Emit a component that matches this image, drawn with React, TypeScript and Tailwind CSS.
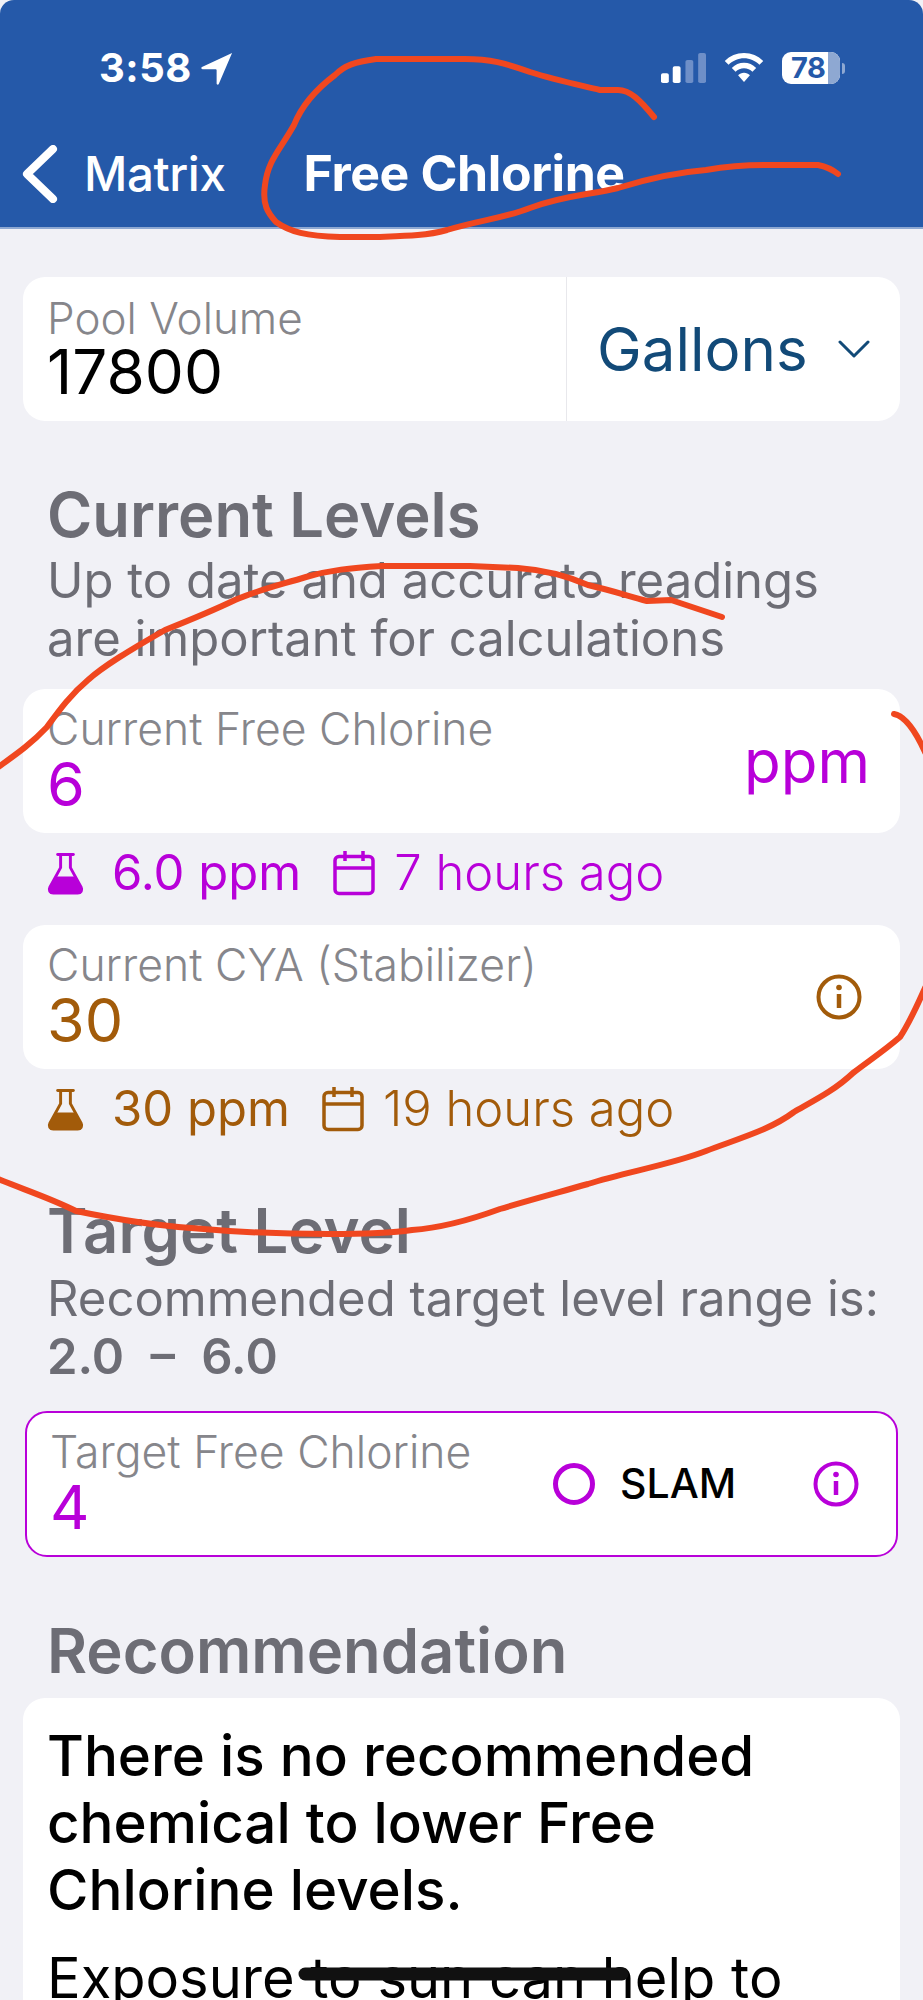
import React from "react";

const MAGENTA = "#b800d9";
const BROWN = "#a25b0a";

function Flask({ color, className }: { color: string; className?: string }) {
  return (
    <svg viewBox="0 0 38 44" className={className} fill="none">
      <path d="M11 2.500h16" stroke={color} strokeWidth="3" strokeLinecap="round" />
      <path d="M14 3v13L3 36c-1.500 3 0 6 3.500 6h25c3.500 0 5-3 3.500-6L24 16V3" stroke={color} strokeWidth="3" strokeLinejoin="round" />
      <path d="M8.500 25h21L36 37c1 3-1 5.500-4 5.500H6c-3 0-5-2.500-4-5.500z" fill={color} />
    </svg>
  );
}

function Cal({ color, className }: { color: string; className?: string }) {
  return (
    <svg viewBox="0 0 42 46" className={className} fill="none" stroke={color} strokeWidth="3.500">
      <rect x="2" y="6.500" width="38" height="37" rx="4" />
      <path d="M2 18h38M12 1v10M30 1v10" />
    </svg>
  );
}

function InfoIcon({ color, className }: { color: string; className?: string }) {
  return (
    <svg viewBox="0 0 46 46" className={className} fill="none">
      <circle cx="23" cy="23" r="20.500" stroke={color} strokeWidth="4" />
      <circle cx="23" cy="13.500" r="2.800" fill={color} />
      <path d="M23 20v14" stroke={color} strokeWidth="4.500" />
    </svg>
  );
}

function Meta({ color, ppm, ago }: { color: string; ppm: string; ago: string }) {
  return (
    <div className="flex items-center pl-[46px] h-[52px] text-[49px] font-light" style={{ color }}>
      <Flask color={color} className="w-[39px] h-[43px]" />
      <span className="ml-[27px] font-normal">{ppm}</span>
      <Cal color={color} className="w-[42px] h-[46px] ml-[32px]" />
      <span className="ml-[19px]">{ago}</span>
    </div>
  );
}

function Field({
  label,
  value,
  color,
  right,
  pr,
}: {
  label: string;
  value: string;
  color: string;
  right: React.ReactNode;
  pr: string;
}) {
  return (
    <div className={`mx-[23px] h-[144px] rounded-[22px] bg-white flex items-center justify-between pl-[24px] ${pr}`}>
      <div className="flex flex-col">
        <span className="text-[44.500px] leading-[44px] font-light text-[#86868b]">{label}</span>
        <span className="mt-[2px] text-[61px] leading-[62px]" style={{ color }}>
          {value}
        </span>
      </div>
      {right}
    </div>
  );
}

export default function App() {
  return (
    <div className="relative w-[923px] h-[2000px] overflow-hidden bg-[#f1f1f6] font-['Inter',sans-serif]">
      <header className="h-[229px] bg-[#2559a9] rounded-t-[14px] text-white flex flex-col border-b-2 border-[#8ea8d2]">
        <div className="h-[140px] pl-[99px] pr-[78px] flex items-center justify-between">
          <div className="flex items-center gap-[9px]">
            <span className="text-[40px] font-bold tracking-[0.5px]">3:58</span>
            <svg viewBox="0 0 34 34" className="w-[33px] h-[33px]" fill="white">
              <path d="M32 1 1 15.500c-1.200.7-.7 2.300.6 2.300h13.600c.6 0 .9.300.9.900v13.800c0 1.300 1.700 1.700 2.200.5z" />
            </svg>
          </div>
          <div className="flex items-center gap-[18px]">
            <svg viewBox="0 0 46 34" className="w-[45px] h-[30px]" preserveAspectRatio="none">
              <rect x="0" y="23" width="8" height="11" rx="2" fill="white" />
              <rect x="12" y="15" width="8" height="19" rx="2" fill="white" />
              <rect x="25" y="8" width="8" height="26" rx="2" fill="#6e8fc8" />
              <rect x="38" y="0" width="8" height="34" rx="2" fill="#6e8fc8" />
            </svg>
            <svg viewBox="0 0 42 32" className="w-[40px] h-[30px]" fill="white">
              <path d="M21 0C13 0 6 3 .5 8.500l4 4C9 8 15 5.500 21 5.500S33 8 37.500 12.500l4-4C36 3 29 0 21 0z" />
              <path d="M21 10.500c-5 0-9.500 2-13 5.500l4 4c2.300-2.300 5.500-3.800 9-3.800s6.700 1.500 9 3.800l4-4c-3.500-3.500-8-5.500-13-5.500z" />
              <path d="M21 21c-2.500 0-4.700 1-6.300 2.600L21 31l6.300-7.400C25.700 22 23.500 21 21 21z" />
            </svg>
            <div className="flex items-center">
              <div className="relative w-[58px] h-[32px] rounded-[9px] bg-white flex items-center">
                <div className="absolute right-0 top-0 bottom-0 w-[12px] rounded-r-[9px] bg-[#8ea8d2]" />
                <span className="relative ml-[9px] text-[29px] leading-[32px] font-bold tracking-[-0.5px] text-[#2559a9]">78</span>
              </div>
              <div className="ml-[2px] w-[3px] h-[11px] rounded-r-full bg-[#8ea8d2]" />
            </div>
          </div>
        </div>
        <div className="flex-1 flex items-center pl-[22px] pb-[16px]">
          <svg viewBox="0 0 36 58" className="w-[36px] h-[58px]" fill="none" stroke="white" strokeWidth="8" strokeLinecap="round" strokeLinejoin="round">
            <path d="M31 4 5 29l26 25" />
          </svg>
          <span className="ml-[26px] text-[47.500px] font-medium tracking-[-0.4px]">Matrix</span>
          <span className="ml-[78px] text-[50px] font-bold tracking-[-0.4px]">Free Chlorine</span>
        </div>
      </header>

      <div className="pt-[48px]">
        <div className="mx-[23px] h-[144px] rounded-[22px] bg-white flex">
          <div className="w-[544px] border-r border-[#e8e8ec] pl-[24px] flex flex-col justify-center">
            <span className="text-[44px] leading-[44px] font-light text-[#86868b]">Pool Volume</span>
            <span className="mt-[1px] text-[62px] leading-[62px] text-black">17800</span>
          </div>
          <div className="flex-1 flex items-center justify-between pl-[30px] pr-[30px]">
            <span className="text-[60px] text-[#124a78]">Gallons</span>
            <svg viewBox="0 0 32 20" className="w-[32px] h-[20px]" fill="none" stroke="#124a78" strokeWidth="3" strokeLinecap="round" strokeLinejoin="round">
              <path d="m2 3 14 14L30 3" />
            </svg>
          </div>
        </div>

        <h2 className="ml-[47px] mt-[60px] text-[61.500px] leading-[68px] font-semibold text-[#6d6d75]">Current Levels</h2>
        <p className="ml-[47px] mt-[3px] text-[49px] leading-[58px] text-[#6d6d75]">
          Up to date and accurate readings
          <br />
          are important for calculations
        </p>

        <div className="mt-[21px]">
          <Field
            label="Current Free Chlorine"
            value="6"
            color={MAGENTA}
            pr="pr-[30px]"
            right={<span className="text-[60px] font-normal" style={{ color: MAGENTA }}>ppm</span>}
          />
        </div>
        <div className="mt-[14px]">
          <Meta color={MAGENTA} ppm="6.0 ppm" ago="7 hours ago" />
        </div>
        <div className="mt-[26px]">
          <Field
            label="Current CYA (Stabilizer)"
            value="30"
            color={BROWN}
            pr="pr-[38px]"
            right={<InfoIcon color={BROWN} className="w-[46px] h-[46px]" />}
          />
        </div>
        <div className="mt-[14px]">
          <Meta color={BROWN} ppm="30 ppm" ago="19 hours ago" />
        </div>

        <h2 className="ml-[47px] mt-[62px] text-[61.500px] leading-[68px] font-semibold text-[#6d6d75]">Target Level</h2>
        <p className="ml-[47px] mt-[5px] text-[49px] leading-[58px] text-[#6d6d75]">
          Recommended target level range is:
          <br />
          <span className="font-semibold [word-spacing:14px]">2.0 – 6.0</span>
        </p>

        <div className="mt-[25px] mx-[25px] h-[146px] rounded-[22px] bg-white border-2 border-[#b800d9] flex items-center pl-[23px] pr-[37px]">
          <div className="flex flex-col flex-1">
            <span className="text-[44.500px] leading-[44px] font-light text-[#86868b]">Target Free Chlorine</span>
            <span className="mt-[2px] text-[61px] leading-[62px]" style={{ color: MAGENTA }}>4</span>
          </div>
          <div className="w-[42px] h-[42px] rounded-full border-[5px] border-[#b800d9]" />
          <span className="ml-[25px] w-[193px] text-[41px] font-medium text-black">SLAM</span>
          <InfoIcon color={MAGENTA} className="w-[46px] h-[46px]" />
        </div>

        <h2 className="ml-[47px] mt-[60px] text-[61.500px] leading-[68px] font-semibold text-[#6d6d75]">Recommendation</h2>
        <div className="mt-[13px] mx-[23px] h-[400px] rounded-[22px] bg-white pl-[24px] pt-[24px]">
          <p className="text-[56.500px] leading-[67px] font-medium text-black">
            There is no recommended
            <br />
            chemical to lower Free
            <br />
            Chlorine levels.
          </p>
          <p className="mt-[22px] text-[56px] leading-[67px] text-black">Exposure to sun can help to</p>
        </div>
      </div>

      <svg viewBox="0 0 923 2000" className="absolute left-0 top-0 w-[923px] h-[2000px] pointer-events-none" fill="none" stroke="#f0471f" strokeWidth="6" strokeLinecap="round" strokeLinejoin="round">
        <path d="M654 117C640 100 630 90 618 90L600 90C575 84 555 80 530 72C505 63 490 59 465 59L376 59C355 62 345 65 335 75C315 90 302 105 294 125C280 150 268 160 265 185C262 205 268 213 276 222C290 232 306 236 340 237L376 237C405 236 425 236 447 230C480 220 505 218 530 208C565 195 590 195 618 188C650 178 680 172 706 170C735 165 750 165 765 165L818 165C828 167 833 170 838 174" />
        <path d="M722 617 671 600 647 601C625 595 610 590 588 585C565 575 545 570 518 568L470 566 382 566C350 568 330 570 306 577C280 585 258 590 235 600C210 612 190 620 165 630C130 650 105 665 88 680C70 695 58 712 47 727C30 745 15 755 -3 768" />
        <path d="M894 714C905 716 915 730 925 752" />
        <path d="M925 988C915 1010 910 1022 900 1037C885 1050 870 1060 853 1073C835 1090 815 1100 794 1112C770 1130 740 1138 706 1151C670 1165 625 1172 588 1184C560 1192 530 1200 500 1209C470 1220 440 1228 412 1230C385 1234 355 1234 329 1234C280 1234 235 1232 191 1228C150 1225 110 1218 76 1211C50 1198 25 1190 -2 1179" />
        <path d="M305 1974H622" stroke="#111" strokeWidth="13" />
      </svg>
    </div>
  );
}
